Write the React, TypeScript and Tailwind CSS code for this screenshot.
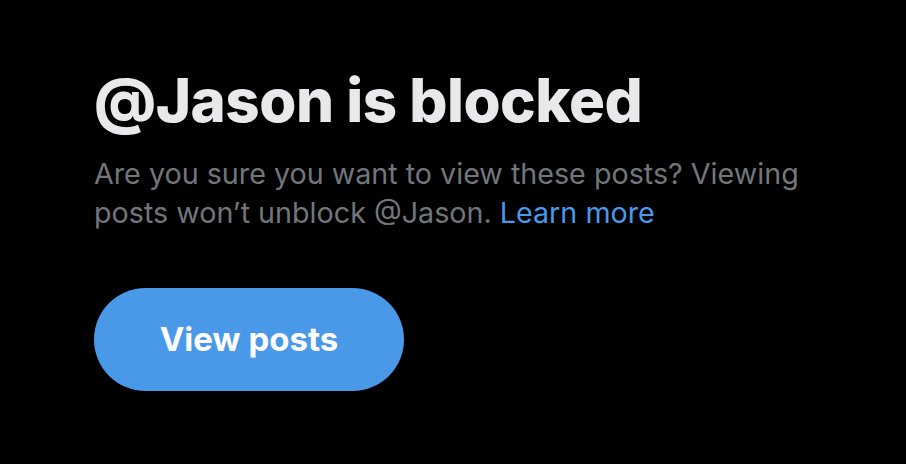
export default function App() {
  return (
    <div className="w-[906px] h-[464px] bg-black overflow-hidden" style={{ fontFamily: 'Inter, "Noto Sans", sans-serif' }}>
      <div className="pl-[94px] pt-[62px] flex flex-col items-start">
        <h1 className="text-[60px] leading-[76px] font-extrabold text-[#e7e9ea] tracking-[-0.5px]">@Jason is blocked</h1>
        <p className="mt-[16px] w-[720px] text-[28.7px] leading-[39px] text-[#71767b]">
          Are you sure you want to view these posts? Viewing posts won’t unblock @Jason.{' '}
          <span className="text-[#4a99e9]">Learn more</span>
        </p>
        <button className="mt-[56px] w-[310px] h-[103px] rounded-full bg-[#4a99e9] text-white text-[33px] font-bold">
          View posts
        </button>
      </div>
    </div>
  )
}
